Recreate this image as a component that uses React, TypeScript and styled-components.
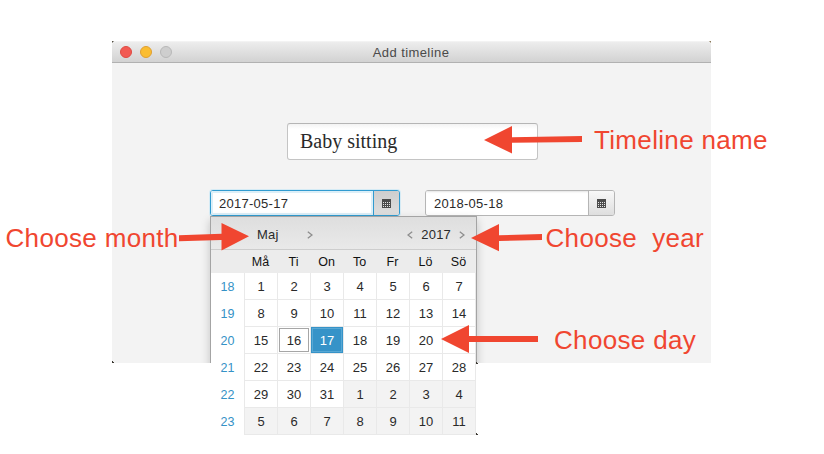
import React from "react";
import styled, { createGlobalStyle } from "styled-components";

const GlobalStyle = createGlobalStyle`
  * { box-sizing: border-box; }
  body { margin: 0; background: #fff; overflow: hidden; }
`;

const sans = `"Liberation Sans", Arial, sans-serif`;

const Stage = styled.main`
  position: relative;
  width: 824px;
  height: 454px;
  padding: 41px 0 0 112px;
  background: #fff;
  font: 13px/16px ${sans};
  color: #2a2a2a;
`;

const Window = styled.section`
  position: relative;
  display: flex;
  flex-direction: column;
  width: 599px;
  height: 322px;
  background: #f3f3f3;
`;

const TitleBar = styled.header`
  display: grid;
  grid-template-columns: 60px 1fr 69px;
  align-items: center;
  height: 22px;
  padding: 0 0 0 8px;
  background: linear-gradient(#ededed, #d2d2d2);
  border-top: 1px solid #f3f3f3;
  border-bottom: 1px solid #b1b1b1;
  border-radius: 4px 4px 0 0;
`;

const Lights = styled.div`
  display: flex;
  gap: 8px;
`;

const Light = styled.span<{ $fill: string; $edge: string }>`
  width: 12px;
  height: 12px;
  border-radius: 50%;
  background: ${(p) => p.$fill};
  border: 1px solid ${(p) => p.$edge};
`;

const Title = styled.h1`
  margin: 0;
  padding-top: 1px;
  text-align: center;
  font: 13px/16px ${sans};
  letter-spacing: 0.42px;
  color: #4a4a4a;
`;

const Form = styled.div`
  display: flex;
  flex-direction: column;
  padding: 60px 0 0 98px;
  gap: 30px;
`;

const NameField = styled.div`
  width: 251px;
  height: 37px;
  margin-left: 77px;
  padding: 0 12px;
  border: 1px solid #c4c4c4;
  border-top-color: #b5b5b5;
  border-radius: 3px;
  background: linear-gradient(#f3f3f3, #fff 5px);
  font: 20px/35px "Liberation Serif", "Times New Roman", serif;
`;

const Pickers = styled.div`
  display: flex;
  gap: 25px;
`;

const Picker = styled.div<{ $focused?: boolean }>`
  display: flex;
  width: 190px;
  height: 26px;
  overflow: hidden;
  border: 1px solid ${(p) => (p.$focused ? "#319bd0" : "#b5b5b5")};
  border-radius: 3px;
  box-shadow: ${(p) => (p.$focused ? "0 0 0 1px #d5ebf5" : "none")};
`;

const DateText = styled.div<{ $focused?: boolean }>`
  flex: 1;
  padding-left: 8px;
  line-height: 25px;
  letter-spacing: 0.27px;
  background: #fff;
  box-shadow: ${(p) => (p.$focused ? "inset 0 0 0 2px #dceff8" : "inset 0 2px 2px -1px #e4e4e4")};
`;

const PickerButton = styled.div<{ $focused?: boolean }>`
  display: grid;
  place-items: center;
  width: 26px;
  border-left: 1px solid ${(p) => (p.$focused ? "#319bd0" : "#b5b5b5")};
  background: ${(p) => (p.$focused ? "linear-gradient(#cecece, #dedede)" : "linear-gradient(#f8f8f8, #dedede)")};
`;

const ShadowClip = styled.div`
  position: absolute;
  inset: 22px 0 0;
  overflow: hidden;
`;

const PopupShadow = styled.div`
  position: absolute;
  left: 98px;
  top: 153px;
  width: 267px;
  height: 219px;
  background: #a4a4a4;
  box-shadow: 0 4px 9px rgba(0, 0, 0, 0.2);
`;

const Popup = styled.div`
  position: absolute;
  left: 99px;
  top: 176px;
  width: 265px;
  background: #fff;
`;

const PopupHeader = styled.div`
  display: flex;
  justify-content: space-between;
  align-items: center;
  height: 33px;
  padding: 3px 11px 0 31px;
  border-bottom: 1px solid #cdcdcd;
  background: linear-gradient(#dedede, #e9e9e9);
`;

const Spinner = styled.div<{ $gap: number }>`
  display: flex;
  align-items: center;
  gap: ${(p) => p.$gap}px;
  letter-spacing: 0.2px;
`;

const Month = styled.span`
  padding-left: 15px;
`;

const Weekdays = styled.div`
  display: grid;
  grid-template-columns: 33px repeat(7, 33px);
  height: 23px;
  background: #ececec;
  line-height: 24px;
  text-align: center;
  font-size: 12.5px;
  color: #111;
`;

const Week = styled.div`
  display: grid;
  grid-template-columns: 33px repeat(7, 33px);
  height: 27px;
  text-align: center;
  line-height: 27px;
`;

const WeekNumber = styled.span`
  padding-top: 1px;
  font-size: 12.5px;
  color: #3592c6;
`;

type DayKind = "normal" | "today" | "selected" | "other";

const Day = styled.span<{ $kind: DayKind }>`
  position: relative;
  display: block;
  height: 27px;
  border-left: 1px solid #e9e9e9;
  border-bottom: 1px solid #e9e9e9;
  background: ${(p) => (p.$kind === "selected" ? "#3693c8" : p.$kind === "other" ? "#f3f3f3" : "#fff")};
  background-clip: padding-box;
  color: ${(p) => (p.$kind === "selected" ? "#fff" : "#2a2a2a")};
  &:last-child { border-right: 1px solid #e9e9e9; width: 34px; }
  &::after {
    content: "";
    display: ${(p) => (p.$kind === "selected" || p.$kind === "today" ? "block" : "none")};
    position: absolute;
    inset: 1px;
    border: 1px solid ${(p) => (p.$kind === "selected" ? "#58a8d4" : "#a6a6a6")};
  }
`;

const Annotation = styled.span<{ $x: number; $y: number }>`
  position: absolute;
  left: ${(p) => p.$x}px;
  top: ${(p) => p.$y}px;
  font: 26px/30px ${sans};
  letter-spacing: 0.33px;
  color: #f04630;
  white-space: pre;
`;

const Arrows = styled.svg`
  position: absolute;
  inset: 0;
`;

const Corner = styled.i<{ $x: number; $y: number }>`
  position: absolute;
  left: ${(p) => p.$x}px;
  top: ${(p) => p.$y}px;
  width: 2px;
  height: 2px;
  background: #3b3832;
  clip-path: polygon(0 0, 50% 0, 50% 50%, 100% 50%, 100% 100%, 0 100%);
`;

const CalendarIcon = () => (
  <svg width="9" height="9" viewBox="0 0 9 9" shapeRendering="crispEdges">
    <path d="M0 0h9v9H0z" fill="#4b4b4b" />
    {[3, 5, 7].map((y) =>
      [1, 3, 5, 7].map((x) => <rect key={`${x}-${y}`} x={x} y={y} width="1" height="1" fill="#e5e5e5" />)
    )}
  </svg>
);

const Chevron = ({ left }: { left?: boolean }) => (
  <svg width="6" height="8" viewBox="0 0 6 8" fill="none" stroke="#8d8d8d" strokeWidth="1.3">
    <path d={left ? "M5.2 .8 1 4l4.2 3.2" : "M.8 .8 5 4 .8 7.2"} />
  </svg>
);

const weeks: [number, number[]][] = [
  [18, [1, 2, 3, 4, 5, 6, 7]],
  [19, [8, 9, 10, 11, 12, 13, 14]],
  [20, [15, 16, 17, 18, 19, 20, 21]],
  [21, [22, 23, 24, 25, 26, 27, 28]],
  [22, [29, 30, 31, 1, 2, 3, 4]],
  [23, [5, 6, 7, 8, 9, 10, 11]],
];

const kindOf = (week: number, day: number): DayKind => {
  if (week >= 22 && day < 15) return "other";
  if (week === 20 && day === 16) return "today";
  if (week === 20 && day === 17) return "selected";
  return "normal";
};

export default function App() {
  return (
    <>
      <GlobalStyle />
      <Stage>
        <Window>
          <TitleBar>
            <Lights>
              <Light $fill="#f25a53" $edge="#df4a42" />
              <Light $fill="#fabd31" $edge="#df9f31" />
              <Light $fill="#cecece" $edge="#b8b8b8" />
            </Lights>
            <Title>Add timeline</Title>
          </TitleBar>
          <Form>
            <NameField>Baby sitting</NameField>
            <Pickers>
              <Picker $focused>
                <DateText $focused>2017-05-17</DateText>
                <PickerButton $focused><CalendarIcon /></PickerButton>
              </Picker>
              <Picker>
                <DateText>2018-05-18</DateText>
                <PickerButton><CalendarIcon /></PickerButton>
              </Picker>
            </Pickers>
          </Form>
          <ShadowClip><PopupShadow /></ShadowClip>
          <Popup>
            <PopupHeader>
              <Spinner $gap={28}>
                <Month>Maj</Month>
                <Chevron />
              </Spinner>
              <Spinner $gap={8}>
                <Chevron left />
                <span>2017</span>
                <Chevron />
              </Spinner>
            </PopupHeader>
            <Weekdays>
              <span />
              {["Må", "Ti", "On", "To", "Fr", "Lö", "Sö"].map((d) => <span key={d}>{d}</span>)}
            </Weekdays>
            {weeks.map(([week, days]) => (
              <Week key={week}>
                <WeekNumber>{week}</WeekNumber>
                {days.map((day) => <Day key={day} $kind={kindOf(week, day)}>{week === 20 && day === 21 ? "" : day}</Day>)}
              </Week>
            ))}
          </Popup>
        </Window>
        <Corner $x={112} $y={361} />
        <Corner $x={476} $y={362} />
        <Corner $x={476} $y={433} />
        <Arrows width="824" height="454" viewBox="0 0 824 454" fill="#f04630">
          <path d="M484 140 512 126v11.2l70-1.200v6l-70 .8v10.600z" />
          <path d="M249 236.200 221.500 223v10.700l-42.500 1.600v6l42.500-1.200v10.400z" />
          <path d="M471 238 499 224v11.300l43-1.300v6l-43 .9v10.400z" />
          <path d="M441 339 469 325v11h69v6h-69v11z" />
          <path d="M112 41h2l-2 2z" fill="#555044" />
          <path d="M711 41h-2l2 2z" fill="#8c7a5a" />
        </Arrows>
        <Annotation $x={594} $y={125}>Timeline name</Annotation>
        <Annotation $x={5.5} $y={223}>Choose month</Annotation>
        <Annotation $x={545.5} $y={223}>Choose  year</Annotation>
        <Annotation $x={554} $y={325}>Choose day</Annotation>
      </Stage>
    </>
  );
}
